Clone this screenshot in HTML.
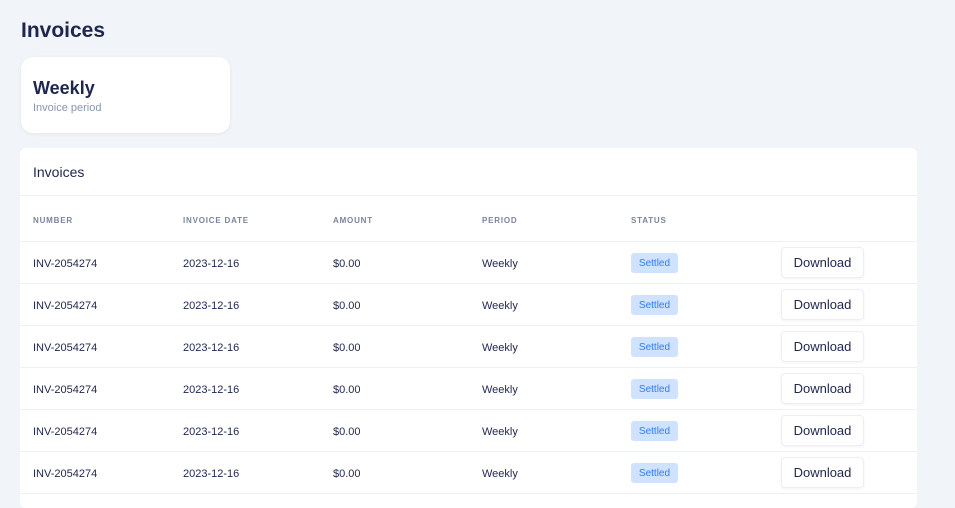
<!DOCTYPE html>
<html><head><style>
*{margin:0;padding:0;box-sizing:border-box}
body{width:955px;height:489px;overflow:hidden;background:#f1f4f8;font-family:"Liberation Sans",sans-serif;color:#1e2650;position:relative}
h1{position:absolute;left:21px;top:19px;font-size:21px;font-weight:bold;color:#1e2650}
.card{position:absolute;left:21px;top:57px;width:209px;height:76px;background:#fff;border-radius:12px;box-shadow:0 1px 4px rgba(0,0,0,.06)}
.card b{position:absolute;left:12px;top:21px;font-size:18px;color:#1e2650}
.card span{position:absolute;left:12px;top:45px;font-size:11px;color:#8a94ad}
.tbl{position:absolute;left:20px;top:148px;width:897px;height:360px;background:#fff;border-radius:6px}
.th{height:48px;border-bottom:1px solid #edf0f4;padding:16px 13px;font-size:14px;color:#1e2650}
.row{position:relative;height:42px;border-bottom:1px solid #edf0f4;font-size:11px;color:#1e2650}
.hd{height:46px;font-size:8px;font-weight:bold;letter-spacing:.8px;color:#7a849c}
.row div{position:absolute;top:16px}
.hd div{top:20px}
.b{top:11px!important;left:611px;width:47px;height:20px;background:#cfe2ff;color:#2f7df6;border-radius:3px;font-size:10px;text-align:center;line-height:21px}
.d{top:5px!important;left:761px;width:83px;height:31px;border:1px solid #eceef2;border-radius:4px;box-shadow:0 1px 2px rgba(0,0,0,.05);font-size:13px;text-align:center;line-height:30px;color:#1e2650}
</style></head><body>
<h1>Invoices</h1>
<div class="card"><b>Weekly</b><span>Invoice period</span></div>
<div class="tbl">
<div class="th">Invoices</div>
<div class="row hd"><div style="left:13px">NUMBER</div><div style="left:163px">INVOICE DATE</div><div style="left:313px">AMOUNT</div><div style="left:462px">PERIOD</div><div style="left:611px">STATUS</div></div>
<div class="row"><div style="left:13px">INV-2054274</div><div style="left:163px">2023-12-16</div><div style="left:313px">$0.00</div><div style="left:462px">Weekly</div><div class="b">Settled</div><div class="d">Download</div></div>
<div class="row"><div style="left:13px">INV-2054274</div><div style="left:163px">2023-12-16</div><div style="left:313px">$0.00</div><div style="left:462px">Weekly</div><div class="b">Settled</div><div class="d">Download</div></div>
<div class="row"><div style="left:13px">INV-2054274</div><div style="left:163px">2023-12-16</div><div style="left:313px">$0.00</div><div style="left:462px">Weekly</div><div class="b">Settled</div><div class="d">Download</div></div>
<div class="row"><div style="left:13px">INV-2054274</div><div style="left:163px">2023-12-16</div><div style="left:313px">$0.00</div><div style="left:462px">Weekly</div><div class="b">Settled</div><div class="d">Download</div></div>
<div class="row"><div style="left:13px">INV-2054274</div><div style="left:163px">2023-12-16</div><div style="left:313px">$0.00</div><div style="left:462px">Weekly</div><div class="b">Settled</div><div class="d">Download</div></div>
<div class="row"><div style="left:13px">INV-2054274</div><div style="left:163px">2023-12-16</div><div style="left:313px">$0.00</div><div style="left:462px">Weekly</div><div class="b">Settled</div><div class="d">Download</div></div>
</div>
</body></html>
